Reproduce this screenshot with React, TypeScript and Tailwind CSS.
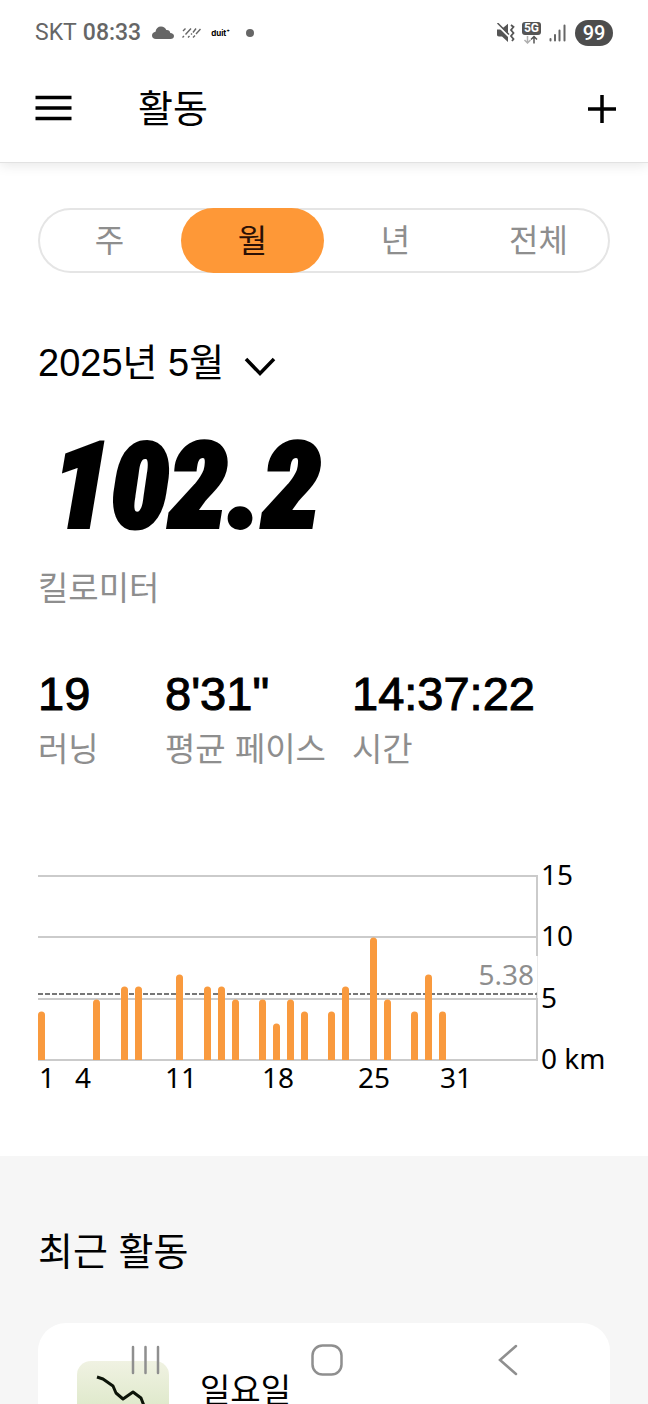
const TABS = ['주', '월', '년', '전체'];

const STATS = [
  { value: '19', label: '러닝' },
  { value: '8\'31"', label: '평균 페이스' },
  { value: '14:37:22', label: '시간' },
];

// 날짜별 러닝 거리 (km)
const RUNS = [
  { day: 1, km: 4 },
  { day: 5, km: 5 },
  { day: 7, km: 6 },
  { day: 8, km: 6 },
  { day: 11, km: 7 },
  { day: 13, km: 6 },
  { day: 14, km: 6 },
  { day: 15, km: 5 },
  { day: 17, km: 5 },
  { day: 18, km: 3 },
  { day: 19, km: 5 },
  { day: 20, km: 4 },
  { day: 22, km: 4 },
  { day: 23, km: 6 },
  { day: 25, km: 10 },
  { day: 26, km: 5 },
  { day: 28, km: 4 },
  { day: 29, km: 7 },
  { day: 30, km: 4 },
];

const DAY_LABELS = [
  { day: 1, x: 9 },
  { day: 4, x: 45 },
  { day: 11, x: 143 },
  { day: 18, x: 240 },
  { day: 25, x: 336 },
  { day: 31, x: 418 },
];

const Y_LABELS = [
  { text: '15', y: 16 },
  { text: '10', y: 77 },
  { text: '5', y: 139 },
  { text: '0 km', y: 200 },
];

function StatusBar() {
  return (
    <div className="flex h-[66px] items-center justify-between px-[35px] font-['Roboto',sans-serif] text-[#666666]">
      <div className="flex items-center">
        <span className="text-[23px]">SKT</span>
        <span className="ml-[6px] text-[23px] font-medium">08:33</span>
        <svg className="ml-[11px]" width="22" height="14" viewBox="0 0 22 14" fill="#666666">
          <path d="M4 13C1.500 13 0 11.500 0 9.500C0 7.500 1.500 6 3.500 5.800C4 2.500 6 .5 9 .5C11.600 .5 13.400 1.800 14.300 4C16.500 3.700 18 5 18.300 6.900C20.500 7 22 8.200 22 10C22 11.800 20.600 13 18.500 13Z" />
        </svg>
        <svg className="ml-[8px]" width="19" height="12" viewBox="0 0 19 12" stroke="#666666" strokeWidth="1.400" fill="none">
          <path d="M1 4L3.500 1.500M.5 10.500L2 9M3.500 7.500L9 1.500M6 10.500L7.500 9M9 7.500L10 6.500M11 5.500L14 1.500M11 10.500L13 8.500M14 7L18.500 2" />
        </svg>
        <span className="ml-[10px] font-['Inter',sans-serif] text-[8px] font-bold text-black">duit⁺</span>
        <span className="ml-[16px] size-[8px] rounded-full bg-[#666666]" />
      </div>
      <div className="flex items-center">
        <svg width="20" height="20" viewBox="0 0 20 20" fill="none">
          <path d="M1 6.500H5L12 .8V19L6 13.500H3C1.500 13.500 1 12.500 1 11.500Z" fill="#555555" />
          <path d="M0 .5L13 13.500" stroke="#ffffff" strokeWidth="2" />
          <path d="M1.500 0L13 11.500" stroke="#555555" strokeWidth="1.500" />
          <path d="M15 2L17.500 4L15 7L17.500 10L15 13L17.500 16L16 18" stroke="#555555" strokeWidth="1.800" />
        </svg>
        <div className="ml-[6px] flex flex-col items-center">
          <span className="rounded-[3px] bg-[#555555] px-[2px] text-[12px] leading-[13px] font-bold text-white">
            5G
          </span>
          <svg width="16" height="9" viewBox="0 0 16 9" fill="none" strokeWidth="1.500">
            <path d="M4.500 1V8M1.500 5L4.500 8L7.500 5" stroke="#b0b0b0" />
            <path d="M11 8.500V1.500M8 4.500L11 1.500L14 4.500" stroke="#555555" />
          </svg>
        </div>
        <svg className="ml-[8px]" width="17" height="18" viewBox="0 0 17 18" stroke="#666666" strokeWidth="2" strokeLinecap="round">
          <path d="M1.500 15V16.500M6 11V16.500M10.500 6.500V16.500M15.500 1.500V16.500" />
        </svg>
        <span className="ml-[9px] flex h-[26px] w-[38px] items-center justify-center rounded-full bg-[#4d4d4d] text-[20px] font-medium text-white">
          99
        </span>
      </div>
    </div>
  );
}

function DistanceChart() {
  return (
    <svg className="mt-[86px] w-full overflow-visible" viewBox="0 0 572 240" role="img" aria-label="일별 거리">
      {/* 격자선 */}
      <path d="M0 16H499M0 77H499M0 139H499M0 200H499M499 15V201" stroke="#cbcbcb" strokeWidth="2" fill="none" />
      <rect x="440" y="96" width="60" height="36" fill="#ffffff" />
      <rect x="499" y="96" width="1" height="42" fill="#ececec" />
      <path d="M0 134H499" stroke="#777777" strokeWidth="2" strokeDasharray="5 2" />

      {RUNS.map(({ day, km }) => {
        const x = Math.round((day - 1) * 13.83);
        const top = Math.round(200 - km * 12.26);
        return (
          <path
            key={day}
            d={`M${x} 200V${top + 4}a3.500 3.500 0 0 1 7 0V200Z`}
            fill="#f99a3e"
          />
        );
      })}

      <g className="font-['Noto_Sans',sans-serif] text-[28px]" fill="#000000">
        {Y_LABELS.map(({ text, y }) => (
          <text key={text} x="503" y={y + 9}>{text}</text>
        ))}
        {DAY_LABELS.map(({ day, x }) => (
          <text key={day} x={x} y="228" textAnchor="middle">{day}</text>
        ))}
        <text x="496" y="125" textAnchor="end" fill="#8e8e8e">5.38</text>
      </g>
    </svg>
  );
}

function NavigationBar() {
  return (
    <nav className="absolute inset-x-0 bottom-0 grid h-[88px] grid-cols-3 pr-[49px] pl-[55px]">
      <button aria-label="최근 앱" className="flex items-center justify-center">
        <svg width="30" height="30" viewBox="0 0 30 30" stroke="#8f8f8f" strokeWidth="2.500" strokeLinecap="round">
          <path d="M2 2V28M14.500 2V28M27 2V28" />
        </svg>
      </button>
      <button aria-label="홈" className="flex items-center justify-center">
        <svg width="32" height="32" viewBox="0 0 32 32" stroke="#8f8f8f" strokeWidth="2.500" fill="none">
          <rect x="1.500" y="1.500" width="29" height="29" rx="10" />
        </svg>
      </button>
      <button aria-label="뒤로" className="flex items-center justify-center">
        <svg width="20" height="32" viewBox="0 0 20 32" stroke="#8f8f8f" strokeWidth="2.500" strokeLinecap="round" fill="none">
          <path d="M18 2L2 16L18 30" />
        </svg>
      </button>
    </nav>
  );
}

export default function App() {
  return (
    <div className="relative flex h-screen flex-col overflow-hidden bg-white font-['Liberation_Sans','Noto_Sans_CJK_KR',sans-serif] text-black">
      {/* 상단 영역 */}
      <header className="shrink-0 border-b border-[#e2e2e2] shadow-[0_2px_12px_rgba(0,0,0,0.1)]">
        <StatusBar />
        <div className="flex h-[96px] items-center pr-[32px] pb-[10px] pl-[35px]">
          <button aria-label="메뉴">
            <svg width="37" height="28" viewBox="0 0 37 28" stroke="#000000" strokeWidth="3.500">
              <path d="M.5 2.500H36.500M.5 13H36.500M.5 23.500H36.500" />
            </svg>
          </button>
          <h1 className="ml-[66px] text-[38px] leading-[48px]">활동</h1>
          <button aria-label="추가" className="ml-auto">
            <svg width="28" height="28" viewBox="0 0 28 28" stroke="#000000" strokeWidth="3.500">
              <path d="M0 14H28M14 0V28" />
            </svg>
          </button>
        </div>
      </header>

      <main className="flex flex-1 flex-col">
        <section className="px-[38px] pt-[45px] pb-[56px]">
          {/* 기간 탭 */}
          <div role="tablist" className="grid h-[65px] grid-cols-4 rounded-full shadow-[inset_0_0_0_2px_#e5e5e5]">
            {TABS.map((tab) => (
              <button
                key={tab}
                role="tab"
                aria-selected={tab === '월'}
                className={
                  tab === '월'
                    ? 'rounded-full bg-[#fe9837] text-[32px] leading-[48px] text-[#2b1005]'
                    : 'text-[32px] leading-[48px] text-[#8e8e8e]'
                }
              >
                {tab}
              </button>
            ))}
          </div>

          <button className="mt-[66px] flex items-center text-[38px] leading-[48px]">
            2025년 5월
            <svg className="mt-[8px] ml-[20px]" width="32" height="20" viewBox="0 0 32 20" stroke="#000000" strokeWidth="3.500" fill="none">
              <path d="M2 2L16 16.500L30 2" />
            </svg>
          </button>

          {/* 총 거리 */}
          <p className="mt-[52px] pl-[14px] font-['Roboto_Condensed','Liberation_Sans',sans-serif] text-[118px] leading-[96px] font-black italic [-webkit-text-stroke:4px_#000]">
            102.2
          </p>
          <p className="mt-[30px] text-[33px] leading-[48px] text-[#8e8e8e]">킬로미터</p>

          <dl className="mt-[53px] grid grid-cols-[127px_187px_1fr]">
            {STATS.map(({ value, label }) => (
              <div key={label} className="flex flex-col-reverse">
                <dt className="mt-1 text-[33px] leading-[48px] whitespace-nowrap text-[#8e8e8e]">{label}</dt>
                <dd className="text-[47px] leading-[56px] [-webkit-text-stroke:1px_#000]">{value}</dd>
              </div>
            ))}
          </dl>

          <DistanceChart />
        </section>

        {/* 최근 활동 */}
        <section className="flex-1 bg-[#f6f6f6] px-[38px] pt-[68px]">
          <h2 className="text-[38px] leading-[56px]">최근 활동</h2>
          <article className="mt-[43px] flex h-[200px] rounded-[28px] bg-white pt-[38px] pl-[39px]">
            <svg className="size-[92px] rounded-[14px]" viewBox="0 0 92 92" fill="none">
              <defs>
                <linearGradient id="map" x1="0" y1="0" x2="0" y2="1">
                  <stop offset="0" stopColor="#f0f2e2" />
                  <stop offset=".5" stopColor="#dfe9cb" />
                  <stop offset="1" stopColor="#cfe3bb" />
                </linearGradient>
              </defs>
              <rect width="92" height="92" fill="url(#map)" />
              <path d="M20 16L26 18L36 25L39 32L46 38L56 31L64 37L69 50" stroke="#0c1408" strokeWidth="3" strokeLinejoin="round" />
            </svg>
            <h3 className="ml-[31px] pt-[6px] text-[33px] leading-[48px]">일요일</h3>
          </article>
        </section>
      </main>

      <NavigationBar />
    </div>
  );
}
